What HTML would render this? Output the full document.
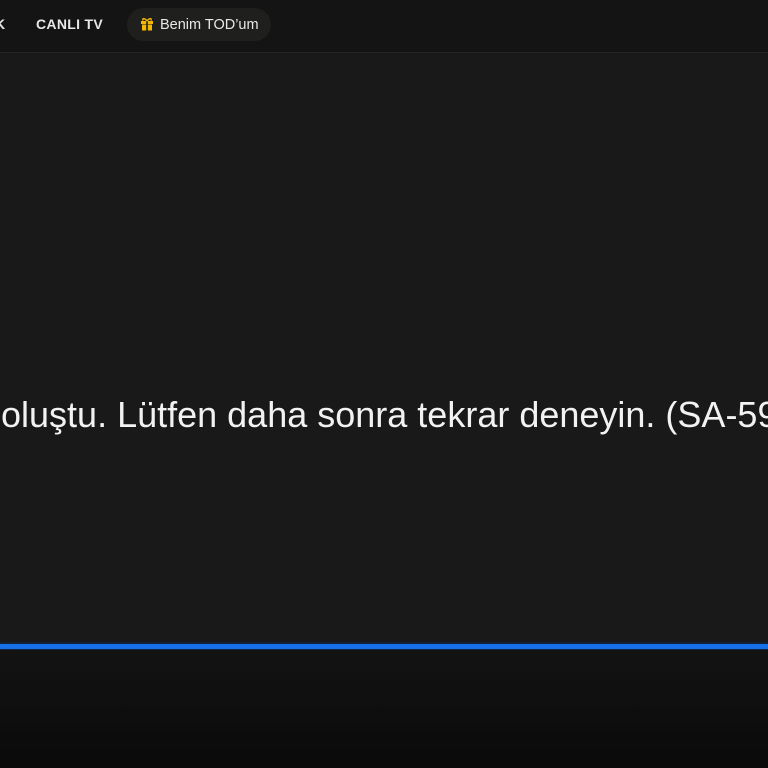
<!DOCTYPE html>
<html><head><meta charset="utf-8"><style>
html,body{margin:0;padding:0;width:768px;height:768px;overflow:hidden;background:#191919;font-family:"Liberation Sans",sans-serif;}
.hdr{position:absolute;left:0;top:0;width:768px;height:52px;background:#141414;border-bottom:1px solid #242424;}
.nav{position:absolute;top:16px;color:#e8e8e8;font-weight:bold;font-size:14px;letter-spacing:0.3px;}
.pill{position:absolute;left:127px;top:8px;width:144px;height:33px;border-radius:17px;background:#1f1f1d;}
.pill span{position:absolute;left:33px;top:9px;color:#e8e8e8;font-size:14.5px;}
.msg{position:absolute;left:1px;top:394px;white-space:nowrap;color:#f2f2f2;font-size:36px;letter-spacing:0px;}
.bar{position:absolute;left:0;top:644px;width:768px;height:5px;background:#1570ea;box-shadow:0 0 3px #0a3a80;}
.bot{position:absolute;left:0;top:650px;width:768px;height:118px;background:linear-gradient(#131313,#0a0a0a);}
</style></head><body>
<div class="hdr">
<div class="nav" style="left:-5px">K</div>
<div class="nav" style="left:36px">CANLI TV</div>
<div class="pill">
<svg style="position:absolute;left:13px;top:9px" width="14" height="14" viewBox="0 0 14 14"><rect x="1" y="4" width="12" height="3" fill="#f2b705"/><rect x="2" y="7.5" width="10" height="6" fill="#f2b705"/><rect x="6.2" y="4" width="1.6" height="10" fill="#1f1f1d"/><path d="M7 4C5 1 2 1 3 3.5M7 4C9 1 12 1 11 3.5" stroke="#f2b705" stroke-width="1.5" fill="none"/></svg>
<span>Benim TOD’um</span></div>
</div>
<div class="msg">oluştu. Lütfen daha sonra tekrar deneyin. (SA-59</div>
<div class="bar"></div>
<div class="bot"></div>
</body></html>
